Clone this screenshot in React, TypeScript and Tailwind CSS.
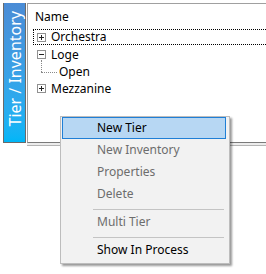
import React from "react";

function PlusMinus({ minus }: { minus?: boolean }) {
  return (
    <svg width="9" height="9" viewBox="0 0 9 9" className="block shrink-0">
      <rect x="0.5" y="0.5" width="8" height="8" fill="#fff" stroke="#919191" />
      <line x1="2" y1="4.5" x2="7" y2="4.5" stroke="#222" />
      {!minus && <line x1="4.5" y1="2" x2="4.5" y2="7" stroke="#222" />}
    </svg>
  );
}

function MenuItem({ label, active, disabled }: { label: string; active?: boolean; disabled?: boolean }) {
  return (
    <div
      className={
        "h-[22px] flex items-center pl-[34px] border " +
        (active ? "bg-[#b7d7f3] border-[#1f7fd6]" : "border-transparent") +
        (disabled ? " text-[#6d6d6d]" : " text-black")
      }
    >
      {label}
    </div>
  );
}

function Sep() {
  return (
    <div className="h-[6px] pt-[4px] pl-[31px] pr-[2px]">
      <div className="h-px w-full bg-[#c4c4c4]" />
    </div>
  );
}

export default function App() {
  return (
    <div className="relative w-[266px] h-[274px] bg-white overflow-hidden font-['Noto_Sans',sans-serif] text-[12px] leading-none">
      <div className="flex pt-[3px] pl-[3px]">
        <div className="w-[23px] h-[140px] bg-gradient-to-b from-[#4b8cd6] to-[#00b6f7] border-x border-b border-[#6a6a6a] flex justify-center items-end pb-[15px]">
          <span className="[writing-mode:vertical-rl] rotate-180 whitespace-nowrap text-white text-[16px] leading-[20px]">
            Tier / Inventory
          </span>
        </div>
        <div className="ml-[1px] flex-1">
          <div className="h-[140px] border-t border-l border-b border-t-[#a0a0a0] border-l-[#a0a0a0] border-b-[#7a7a7a] bg-white">
            <div className="h-[25px] flex items-center pl-[7px] text-black">Name</div>
            <div className="pl-[5px]">
              <div className="h-[16px] mb-px flex items-center border border-dotted border-black border-r-0 pl-[3px]">
                <PlusMinus />
                <span className="ml-[5px] text-black">Orchestra</span>
              </div>
              <div className="h-[17px] flex items-center pl-[4px]">
                <PlusMinus minus />
                <span className="ml-[5px] text-black">Loge</span>
              </div>
              <div className="h-[17px] flex items-center pl-[8px] relative">
                <div className="absolute left-[8px] top-[-3px] h-[12px] border-l border-dotted border-[#8a8a8a]" />
                <div className="w-[16px] border-t border-dotted border-[#8a8a8a] mt-[2px]" />
                <span className="ml-[2px] text-black">Open</span>
              </div>
              <div className="h-[17px] flex items-center pl-[4px]">
                <PlusMinus />
                <span className="ml-[5px] text-black">Mezzanine</span>
              </div>
            </div>
          </div>
          <div className="h-[3px] bg-[#ececec] border-b border-[#b4b4b4]" />
        </div>
      </div>

      <div className="absolute left-[60px] top-[116px] w-[170px] bg-[#f2f2f2] border border-[#bdbdbd] shadow-[2px_2px_2px_rgba(0,0,0,0.4)] pl-px pr-[3px] pt-0 pb-[2px]">
        <MenuItem label="New Tier" active />
        <MenuItem label="New Inventory" disabled />
        <MenuItem label="Properties" disabled />
        <MenuItem label="Delete" disabled />
        <Sep />
        <MenuItem label="Multi Tier" disabled />
        <Sep />
        <MenuItem label="Show In Process" />
      </div>
    </div>
  );
}
